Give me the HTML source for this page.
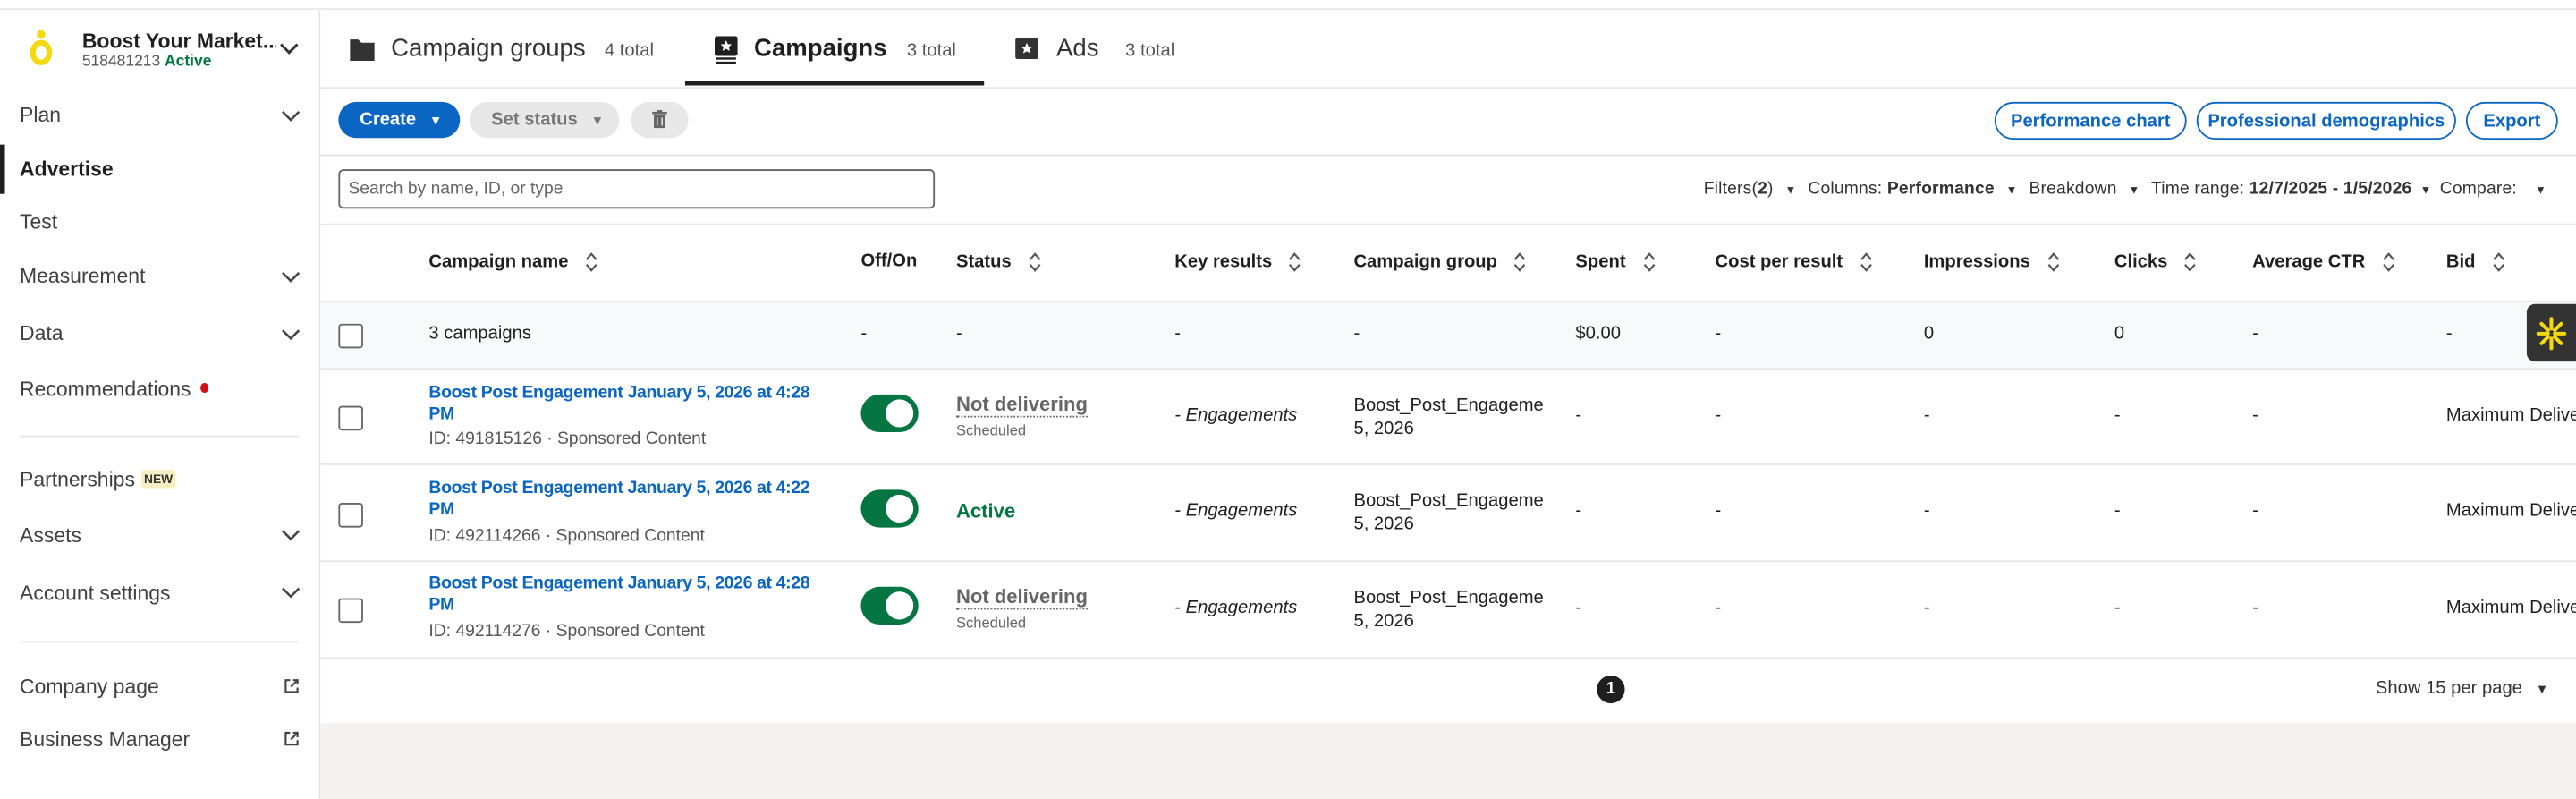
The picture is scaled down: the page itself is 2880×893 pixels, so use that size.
<!DOCTYPE html>
<html><head><meta charset="utf-8">
<style>
html,body{margin:0;padding:0;width:2880px;height:892px;overflow:hidden;background:#fff;}
#w{position:absolute;left:0;top:0;width:1568px;height:486px;transform:scale(1.836735);transform-origin:0 0;font-family:"Liberation Sans",Arial,sans-serif;color:#1f1f1f;}
.a{position:absolute;white-space:nowrap;}
.nav{position:absolute;left:12px;font-size:12.5px;color:#404040;}
.chev{position:absolute;left:171px;width:12px;height:8px;}
.hl{position:absolute;height:1px;background:#e6e6e6;}
.th{position:absolute;top:153px;font-size:11px;font-weight:bold;color:#1f1f1f;white-space:nowrap;}
.td{position:absolute;font-size:11px;color:#1f1f1f;white-space:nowrap;}
.srt{display:inline-block;vertical-align:middle;margin-left:10px;width:8px;height:13px;}
.cb{position:absolute;left:206px;width:13px;height:13px;border:1px solid #666;border-radius:2px;background:#fff;}
.tog{position:absolute;left:524px;width:35px;height:23px;border-radius:12px;background:#057642;}
.tog:after{content:"";position:absolute;right:3px;top:3px;width:17px;height:17px;border-radius:50%;background:#fff;}
.lnk{position:absolute;left:261px;font-size:10.6px;font-weight:bold;color:#0a66c2;line-height:13px;width:250px;letter-spacing:-0.2px;white-space:normal;}
.sub{position:absolute;left:261px;font-size:10.5px;color:#555;white-space:nowrap;}
.obtn{position:absolute;top:62px;height:21px;border:1px solid #0a66c2;border-radius:12px;color:#0a66c2;font-size:11px;font-weight:bold;line-height:22px;text-align:center;}
.ext{position:absolute;left:173px;width:9px;height:9px;}
</style></head><body><div id="w">
<div class="hl" style="left:0;top:5px;width:1568px;background:#e8e8e8"></div>
<div style="position:absolute;left:194px;top:6px;width:1px;height:480px;background:#e6e6e6"></div>
<svg class="a" style="left:16px;top:17px" width="18" height="24" viewBox="0 0 18 24"><circle cx="9" cy="4" r="2.6" fill="#f5d90f"/><ellipse cx="9" cy="15" rx="5" ry="6" fill="none" stroke="#f5d90f" stroke-width="3.4"/></svg>
<div class="a" style="left:50px;top:18px;font-size:12.5px;font-weight:bold;color:#1f1f1f;width:118px;overflow:hidden">Boost Your Market...</div>
<div class="a" style="left:50px;top:32px;font-size:9.5px;color:#555">518481213 <span style="color:#057642;font-weight:bold">Active</span></div>
<svg class="a" style="left:170px;top:26px" width="12" height="8" viewBox="0 0 12 8"><path d="M1 1l5 5 5-5" fill="none" stroke="#333" stroke-width="1.6"/></svg>

<div class="nav" style="top:63px">Plan</div>
<svg class="chev" style="top:67px" viewBox="0 0 12 8"><path d="M1 1l5 5 5-5" fill="none" stroke="#444" stroke-width="1.4"/></svg>
<div style="position:absolute;left:0;top:88px;width:3px;height:30px;background:#1f1f1f"></div>
<div class="nav" style="top:96px;font-weight:bold;color:#1f1f1f">Advertise</div>
<div class="nav" style="top:128px">Test</div>
<div class="nav" style="top:161px">Measurement</div>
<svg class="chev" style="top:165px" viewBox="0 0 12 8"><path d="M1 1l5 5 5-5" fill="none" stroke="#444" stroke-width="1.4"/></svg>
<div class="nav" style="top:196px">Data</div>
<svg class="chev" style="top:200px" viewBox="0 0 12 8"><path d="M1 1l5 5 5-5" fill="none" stroke="#444" stroke-width="1.4"/></svg>
<div class="nav" style="top:230px">Recommendations <span style="display:inline-block;width:5px;height:6px;border-radius:50%;background:#cc1016;vertical-align:2px;margin-left:2px"></span></div>
<div class="hl" style="left:12px;top:265px;width:170px"></div>
<div class="nav" style="top:285px">Partnerships <span style="font-size:7.5px;font-weight:bold;background:#f6efc4;color:#333;padding:1px 2px;border-radius:2px;vertical-align:2px">NEW</span></div>
<div class="nav" style="top:319px">Assets</div>
<svg class="chev" style="top:322px" viewBox="0 0 12 8"><path d="M1 1l5 5 5-5" fill="none" stroke="#444" stroke-width="1.4"/></svg>
<div class="nav" style="top:354px">Account settings</div>
<svg class="chev" style="top:357px" viewBox="0 0 12 8"><path d="M1 1l5 5 5-5" fill="none" stroke="#444" stroke-width="1.4"/></svg>
<div class="hl" style="left:12px;top:390px;width:170px"></div>
<div class="nav" style="top:411px">Company page</div>
<svg class="ext" style="top:413px" viewBox="0 0 10 10"><path d="M4 1H1v8h8V6M6 1h3v3M9 1L4.5 5.5" fill="none" stroke="#444" stroke-width="1.3"/></svg>
<div class="nav" style="top:443px">Business Manager</div>
<svg class="ext" style="top:445px" viewBox="0 0 10 10"><path d="M4 1H1v8h8V6M6 1h3v3M9 1L4.5 5.5" fill="none" stroke="#444" stroke-width="1.3"/></svg>

<svg class="a" style="left:213px;top:23px" width="15" height="14" viewBox="0 0 15 14"><path d="M0 1h5l2 2h8v11H0z" fill="#333"/></svg>
<div class="a" style="left:238px;top:21px;font-size:15px;color:#333">Campaign groups</div>
<div class="a" style="left:368px;top:25px;font-size:11px;color:#555">4 total</div>
<svg class="a" style="left:435px;top:22px" width="14" height="17" viewBox="0 0 14 17"><rect x="0" y="0" width="14" height="12" rx="1.5" fill="#1f1f1f"/><path d="M7 2.5l1 2.3 2.4.2-1.8 1.6.6 2.4L7 7.7 4.8 9l.6-2.4L3.6 5 6 4.8z" fill="#fff"/><rect x="1" y="13" width="12" height="1.3" fill="#1f1f1f"/><rect x="1" y="15.5" width="12" height="1.3" fill="#1f1f1f"/></svg>
<div class="a" style="left:459px;top:21px;font-size:15px;font-weight:bold;color:#1f1f1f">Campaigns</div>
<div class="a" style="left:552px;top:25px;font-size:11px;color:#555">3 total</div>
<div style="position:absolute;left:417px;top:49px;width:182px;height:3px;background:#1f1f1f"></div>
<svg class="a" style="left:618px;top:23px" width="14" height="13" viewBox="0 0 14 13"><rect width="14" height="13" rx="1.5" fill="#333"/><path d="M7 3l1 2.3 2.4.2-1.8 1.6.6 2.4L7 8.2 4.8 9.5l.6-2.4L3.6 5.5 6 5.3z" fill="#fff"/></svg>
<div class="a" style="left:643px;top:21px;font-size:15px;color:#333">Ads</div>
<div class="a" style="left:685px;top:25px;font-size:11px;color:#555">3 total</div>
<div class="hl" style="left:195px;top:53px;width:1373px"></div>

<div class="a" style="left:206px;top:62px;width:74px;height:22px;border-radius:12px;background:#0a66c2;color:#fff;font-size:11px;font-weight:bold;line-height:22px;text-indent:13px">Create <span style="font-size:8px;margin-left:5px">▼</span></div>
<div class="a" style="left:286px;top:62px;width:91px;height:22px;border-radius:12px;background:#e8e8e8;color:#777;font-size:11px;font-weight:bold;line-height:22px;text-indent:13px">Set status <span style="font-size:8px;margin-left:5px">▼</span></div>
<div class="a" style="left:384px;top:62px;width:35px;height:22px;border-radius:12px;background:#e8e8e8"></div>
<svg class="a" style="left:397px;top:67px" width="9" height="11" viewBox="0 0 9 11"><rect x="0" y="1" width="9" height="1.5" fill="#666"/><rect x="3" y="0" width="3" height="1.5" fill="#666"/><path d="M1 3h7v8H1z" fill="#666"/><path d="M3 4.5v5M6 4.5v5" stroke="#e8e8e8" stroke-width="0.8"/></svg>
<div class="obtn" style="left:1214px;width:115px">Performance chart</div>
<div class="obtn" style="left:1337px;width:156px">Professional demographics</div>
<div class="obtn" style="left:1501px;width:54px">Export</div>
<div class="hl" style="left:195px;top:94px;width:1373px"></div>

<div class="a" style="left:206px;top:103px;width:361px;height:22px;border:1px solid #666;border-radius:3px;"></div>
<div class="a" style="left:212px;top:109px;font-size:10.5px;color:#666">Search by name, ID, or type</div>
<div class="a" style="left:1037px;top:109px;font-size:10.5px;color:#333;letter-spacing:0.1px">Filters(<b>2</b>) <span style="font-size:7px;margin:0 4px">▼</span> Columns: <b>Performance</b> <span style="font-size:7px;margin:0 4px">▼</span> Breakdown <span style="font-size:7px;margin:0 4px">▼</span> Time range: <b>12/7/2025 - 1/5/2026</b> <span style="font-size:7px;margin:0 2px">▼</span> Compare: <span style="font-size:7px;margin-left:8px">▼</span></div>
<div class="hl" style="left:195px;top:136px;width:1373px"></div>

<div class="th" style="left:261px">Campaign name<svg class="srt" viewBox="0 0 8 13"><path d="M1 5l3-3.5L7 5M1 8l3 3.5L7 8" fill="none" stroke="#555" stroke-width="1.2"/></svg></div>
<div class="th" style="left:524px">Off/On</div>
<div class="th" style="left:582px">Status<svg class="srt" viewBox="0 0 8 13"><path d="M1 5l3-3.5L7 5M1 8l3 3.5L7 8" fill="none" stroke="#555" stroke-width="1.2"/></svg></div>
<div class="th" style="left:715px">Key results<svg class="srt" viewBox="0 0 8 13"><path d="M1 5l3-3.5L7 5M1 8l3 3.5L7 8" fill="none" stroke="#555" stroke-width="1.2"/></svg></div>
<div class="th" style="left:824px">Campaign group<svg class="srt" viewBox="0 0 8 13"><path d="M1 5l3-3.5L7 5M1 8l3 3.5L7 8" fill="none" stroke="#555" stroke-width="1.2"/></svg></div>
<div class="th" style="left:959px">Spent<svg class="srt" viewBox="0 0 8 13"><path d="M1 5l3-3.5L7 5M1 8l3 3.5L7 8" fill="none" stroke="#555" stroke-width="1.2"/></svg></div>
<div class="th" style="left:1044px">Cost per result<svg class="srt" viewBox="0 0 8 13"><path d="M1 5l3-3.5L7 5M1 8l3 3.5L7 8" fill="none" stroke="#555" stroke-width="1.2"/></svg></div>
<div class="th" style="left:1171px">Impressions<svg class="srt" viewBox="0 0 8 13"><path d="M1 5l3-3.5L7 5M1 8l3 3.5L7 8" fill="none" stroke="#555" stroke-width="1.2"/></svg></div>
<div class="th" style="left:1287px">Clicks<svg class="srt" viewBox="0 0 8 13"><path d="M1 5l3-3.5L7 5M1 8l3 3.5L7 8" fill="none" stroke="#555" stroke-width="1.2"/></svg></div>
<div class="th" style="left:1371px">Average CTR<svg class="srt" viewBox="0 0 8 13"><path d="M1 5l3-3.5L7 5M1 8l3 3.5L7 8" fill="none" stroke="#555" stroke-width="1.2"/></svg></div>
<div class="th" style="left:1489px">Bid<svg class="srt" viewBox="0 0 8 13"><path d="M1 5l3-3.5L7 5M1 8l3 3.5L7 8" fill="none" stroke="#555" stroke-width="1.2"/></svg></div>

<div style="position:absolute;left:195px;top:183px;width:1373px;height:40px;background:#f8f9fa;border-top:1px solid #e6e6e6;border-bottom:1px solid #e6e6e6"></div>
<div class="cb" style="top:197px"></div>
<div class="td" style="left:261px;top:197px">3 campaigns</div>
<div class="td" style="left:524px;top:197px">-</div>
<div class="td" style="left:582px;top:197px">-</div>
<div class="td" style="left:715px;top:197px">-</div>
<div class="td" style="left:824px;top:197px">-</div>
<div class="td" style="left:959px;top:197px">$0.00</div>
<div class="td" style="left:1044px;top:197px">-</div>
<div class="td" style="left:1171px;top:197px">0</div>
<div class="td" style="left:1287px;top:197px">0</div>
<div class="td" style="left:1371px;top:197px">-</div>
<div class="td" style="left:1489px;top:197px">-</div>

<div class="hl" style="left:195px;top:282px;width:1373px"></div>
<div class="hl" style="left:195px;top:341px;width:1373px"></div>
<div class="hl" style="left:195px;top:400px;width:1373px"></div>

<div class="cb" style="top:247px"></div>
<div class="lnk" style="top:233px">Boost Post Engagement January 5, 2026 at 4:28 PM</div>
<div class="sub" style="top:261px">ID: 491815126 · Sponsored Content</div>
<div class="tog" style="top:240px"></div>
<div class="a" style="left:582px;top:239px;font-size:12px;font-weight:bold;color:#666;border-bottom:1px dotted #666">Not delivering</div>
<div class="a" style="left:582px;top:257px;font-size:9px;color:#666">Scheduled</div>
<div class="td" style="left:715px;top:247px;font-style:italic">- Engagements</div>
<div class="td" style="left:824px;top:240px;line-height:14px">Boost_Post_Engageme<br>5, 2026</div>
<div class="td" style="left:959px;top:247px">-</div><div class="td" style="left:1044px;top:247px">-</div><div class="td" style="left:1171px;top:247px">-</div><div class="td" style="left:1287px;top:247px">-</div><div class="td" style="left:1371px;top:247px">-</div>
<div class="td" style="left:1489px;top:247px">Maximum Delivery</div>

<div class="cb" style="top:306px"></div>
<div class="lnk" style="top:291px">Boost Post Engagement January 5, 2026 at 4:22 PM</div>
<div class="sub" style="top:320px">ID: 492114266 · Sponsored Content</div>
<div class="tog" style="top:298px"></div>
<div class="a" style="left:582px;top:304px;font-size:12px;font-weight:bold;color:#057642">Active</div>
<div class="td" style="left:715px;top:305px;font-style:italic">- Engagements</div>
<div class="td" style="left:824px;top:298px;line-height:14px">Boost_Post_Engageme<br>5, 2026</div>
<div class="td" style="left:959px;top:305px">-</div><div class="td" style="left:1044px;top:305px">-</div><div class="td" style="left:1171px;top:305px">-</div><div class="td" style="left:1287px;top:305px">-</div><div class="td" style="left:1371px;top:305px">-</div>
<div class="td" style="left:1489px;top:305px">Maximum Delivery</div>

<div class="cb" style="top:364px"></div>
<div class="lnk" style="top:349px">Boost Post Engagement January 5, 2026 at 4:28 PM</div>
<div class="sub" style="top:378px">ID: 492114276 · Sponsored Content</div>
<div class="tog" style="top:357px"></div>
<div class="a" style="left:582px;top:356px;font-size:12px;font-weight:bold;color:#666;border-bottom:1px dotted #666">Not delivering</div>
<div class="a" style="left:582px;top:374px;font-size:9px;color:#666">Scheduled</div>
<div class="td" style="left:715px;top:364px;font-style:italic">- Engagements</div>
<div class="td" style="left:824px;top:357px;line-height:14px">Boost_Post_Engageme<br>5, 2026</div>
<div class="td" style="left:959px;top:364px">-</div><div class="td" style="left:1044px;top:364px">-</div><div class="td" style="left:1171px;top:364px">-</div><div class="td" style="left:1287px;top:364px">-</div><div class="td" style="left:1371px;top:364px">-</div>
<div class="td" style="left:1489px;top:364px">Maximum Delivery</div>

<div class="a" style="left:972px;top:411px;width:17px;height:17px;border-radius:50%;background:#1f1f1f;color:#fff;font-size:10px;font-weight:bold;text-align:center;line-height:17px">1</div>
<div class="a" style="left:1446px;top:413px;font-size:11px;color:#333">Show 15 per page <span style="font-size:8px;margin-left:5px">▼</span></div>
<div style="position:absolute;left:195px;top:440px;width:1373px;height:46px;background:#f3f2ef"></div>

<div style="position:absolute;left:1538px;top:185px;width:32px;height:35px;border-radius:5px 0 0 5px;background:#333"></div>
<svg class="a" style="left:1543px;top:192px" width="20" height="22" viewBox="0 0 20 22"><g stroke="#f5d90f" stroke-width="2.2" stroke-linecap="round"><path d="M10 2v6M10 14v6M2 11h6M12 11h6M4 5l4 4M12 13l4 4M16 5l-4 4M8 13l-4 4"/></g></svg>
</div></body></html>
